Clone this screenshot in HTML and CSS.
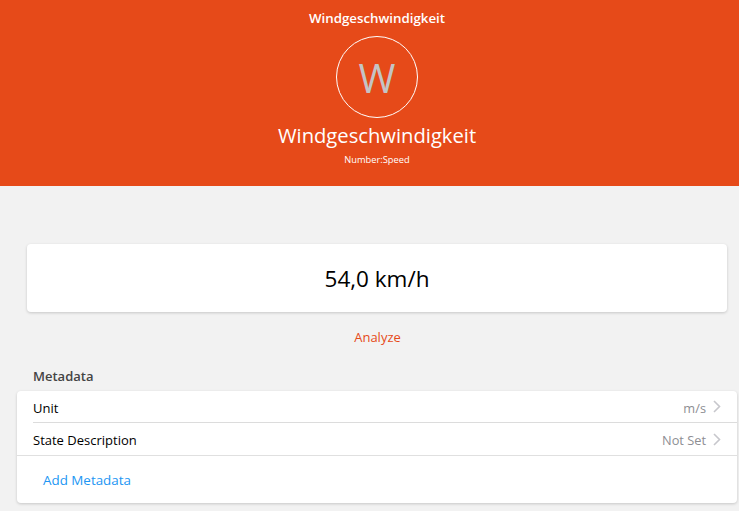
FILE: index.html
```html
<!DOCTYPE html>
<html lang="de">
<head>
    <meta charset="UTF-8">
    <meta name="viewport" content="width=device-width, initial-scale=1.0">
    <title>Windgeschwindigkeit</title>
    <link rel="stylesheet" href="styles.css">
</head>
<body>
    <!-- Item header -->
    <header class="hero">
        <div class="nav-title">Windgeschwindigkeit</div>
        <div class="avatar">W</div>
        <h1 class="item-name">Windgeschwindigkeit</h1>
        <div class="item-type">Number:Speed</div>
    </header>

    <main class="content">
        <div class="state-card">54,0 km/h</div>
        <a class="analyze" href="#">Analyze</a>

        <div class="section-title">Metadata</div>
        <div class="list-card">
            <div class="row">
                <div class="row-inner">
                    <span class="row-label">Unit</span>
                    <span class="row-value">m/s</span>
                    <svg class="chevron" viewBox="0 0 8 13"><path d="M1 1l5.5 5.5L1 12"/></svg>
                </div>
            </div>
            <div class="row row-last">
                <div class="row-inner">
                    <span class="row-label">State Description</span>
                    <span class="row-value">Not Set</span>
                    <svg class="chevron" viewBox="0 0 8 13"><path d="M1 1l5.5 5.5L1 12"/></svg>
                </div>
            </div>
            <a class="add-link" href="#">Add Metadata</a>
        </div>
    </main>
</body>
</html>
```

FILE: styles.css
```css
html, body {
    height: 511px;
    overflow: hidden;
}
body {
    margin: 0;
    background-color: #f2f2f2;
    font-family: "Open Sans", "Noto Sans", sans-serif;
    color: #000;
}
a {
    text-decoration: none;
}
.hero {
    height: 186px;
    box-sizing: border-box;
    padding: 9px 0 0 15px;
    background-color: #e64a19;
    color: #fff;
    display: flex;
    flex-direction: column;
    align-items: center;
}
.nav-title {
    font-size: 13.3px;
    font-weight: 600;
    line-height: 18px;
}
.avatar {
    width: 82px;
    height: 82px;
    box-sizing: border-box;
    margin-top: 9px;
    border: 1px solid #fff;
    border-radius: 50%;
    display: flex;
    align-items: center;
    justify-content: center;
    font-size: 40px;
    color: #c4c4c4;
}
.item-name {
    margin: 2px 0 0;
    font-size: 20.2px;
    font-weight: 400;
    line-height: 30px;
}
.item-type {
    margin-top: 3px;
    font-size: 9.3px;
    line-height: 13px;
}
.content {
    padding: 58px 2px 0 17px;
}
.state-card {
    height: 68px;
    margin: 0 10px;
    background-color: #fff;
    border-radius: 4px;
    box-shadow: 0 1px 3px rgba(0, 0, 0, 0.18);
    display: flex;
    align-items: center;
    justify-content: center;
    font-size: 22.5px;
}
.analyze {
    display: block;
    margin-top: 16px;
    padding-left: 1px;
    font-size: 13px;
    line-height: 18px;
    text-align: center;
    color: #e64a19;
}
.section-title {
    margin: 21px 0 0 16px;
    font-size: 13px;
    font-weight: 600;
    line-height: 18px;
    color: #444;
}
.list-card {
    margin-top: 6px;
    background-color: #fff;
    border-radius: 4px;
    box-shadow: 0 1px 3px rgba(0, 0, 0, 0.18);
}
.row {
    height: 32px;
    padding-left: 16px;
}
.row-last {
    height: 33px;
    padding-left: 0;
    border-bottom: 1px solid #e0e0e0;
    box-sizing: border-box;
}
.row-last .row-inner {
    padding-left: 16px;
    border-bottom: 0;
}
.row-inner {
    height: 100%;
    box-sizing: border-box;
    padding: 2px 16px 0 0;
    border-bottom: 1px solid #dcdcdc;
    display: flex;
    align-items: center;
    font-size: 13px;
}
.row-label {
    flex: 1;
}
.row-value {
    color: #8e8e93;
    font-size: 12.8px;
}
.chevron {
    width: 8px;
    height: 13px;
    margin-left: 7px;
    margin-bottom: 2px;
}
.chevron path {
    fill: none;
    stroke: #c7c7cc;
    stroke-width: 1.6;
}
.add-link {
    display: block;
    padding: 15px 0 14px 26px;
    font-size: 13.4px;
    line-height: 18px;
    color: #2196f3;
}
```
